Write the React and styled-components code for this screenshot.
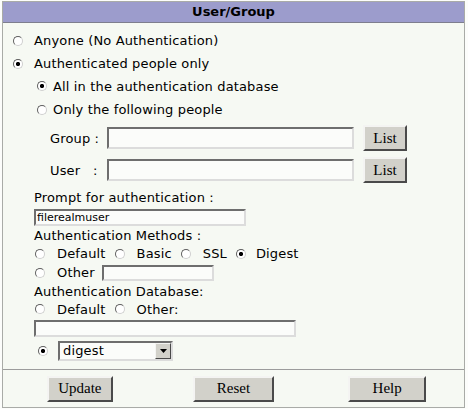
import React from 'react';
import styled, { createGlobalStyle } from 'styled-components';

const GlobalStyle = createGlobalStyle`
  body {
    margin: 0;
    background: #fcfdfb;
    font-family: "DejaVu Sans", Verdana, sans-serif;
    font-size: 13px;
    color: #000;
  }
`;

const Frame = styled.div`
  width: 461px;
  margin: 1px 0 0 2px;
  border: 1px solid #a9aba7;
  background: #f6f9f3;
`;

const Header = styled.div`
  height: 20px;
  line-height: 20px;
  background: #9c9ccc;
  border-bottom: 1px solid #7e7e8e;
  text-align: center;
  font-weight: bold;
`;

const Body = styled.div`
  padding: 6px 0 6px 0;
  letter-spacing: 0.15px;
`;

// one line of the form, height and indent vary per use
const Line = styled.div`
  display: flex;
  align-items: center;
  height: ${p => p.$h}px;
  padding-left: ${p => p.$indent}px;
  white-space: nowrap;
`;

const Radio = styled.input.attrs({ type: 'radio' })`
  appearance: none;
  box-sizing: border-box;
  flex: none;
  width: 10px;
  height: 10px;
  margin: 0 ${p => p.$gap ?? 12}px 0 0;
  border-radius: 50%;
  border: 1px solid;
  border-color: #5e5e5e #cfcfcf #cfcfcf #5e5e5e;
  background: #fff;
  &:checked {
    background: radial-gradient(circle, #000 0 1.8px, #fff 2.4px);
  }
`;

const Choice = styled.label`
  display: inline-flex;
  align-items: center;
  margin-right: 9px;
`;

const FieldLabel = styled.span`
  width: 57px;
  white-space: pre;
`;

const TextBox = styled.input.attrs({ type: 'text' })`
  box-sizing: border-box;
  width: ${p => p.$w}px;
  height: ${p => p.$h}px;
  margin: 0;
  padding: 0 0 0 1px;
  border: 2px solid;
  border-color: #6e6e6e #dcdcdc #dcdcdc #6e6e6e;
  background: #fbfcfa;
  font-family: "DejaVu Sans", Verdana, sans-serif;
  font-size: 11px;
  color: #000;
  outline: none;
`;

const FormButton = styled.button`
  box-sizing: border-box;
  width: ${p => p.$w}px;
  height: ${p => p.$h ?? 26}px;
  margin-left: ${p => p.$ml ?? 0}px;
  padding: 0;
  background: #d2d1ca;
  border: 2px solid;
  border-color: #f4f4f2 #4a4a4a #4a4a4a #f4f4f2;
  font-family: "Liberation Serif", "Times New Roman", serif;
  font-size: 15px;
  letter-spacing: 0;
  color: #000;
`;

const SelectBox = styled.div`
  box-sizing: border-box;
  display: flex;
  align-items: stretch;
  width: 115px;
  height: 20px;
  border: 2px solid;
  border-color: #6e6e6e #dcdcdc #dcdcdc #6e6e6e;
  background: #fbfcfa;
`;

const SelectValue = styled.span`
  flex: 1;
  padding-left: 3px;
  line-height: 16px;
`;

const ArrowBox = styled.span`
  box-sizing: border-box;
  display: flex;
  align-items: center;
  justify-content: center;
  width: 16px;
  background: #d2d1ca;
  border: 1px solid;
  border-color: #f4f4f2 #4a4a4a #4a4a4a #f4f4f2;
`;

const Footer = styled.div`
  display: grid;
  grid-template-columns: repeat(3, 1fr);
  justify-items: center;
  align-items: center;
  height: 37px;
  border-top: 1px solid #9c9c9c;
`;

const App = () => (
  <>
    <GlobalStyle />
    <Frame>
      <Header>User/Group</Header>
      <Body>
        <Line $h={23} $indent={10}>
          <Radio name="who" $gap={11} />
          Anyone (No Authentication)
        </Line>
        <Line $h={23} $indent={10}>
          <Radio name="who" $gap={11} defaultChecked />
          Authenticated people only
        </Line>
        <Line $h={22} $indent={34}>
          <Radio name="scope" $gap={6} defaultChecked />
          All in the authentication database
        </Line>
        <Line $h={25} $indent={34}>
          <Radio name="scope" $gap={6} />
          Only the following people
        </Line>
        <Line $h={32} $indent={47}>
          <FieldLabel>Group :</FieldLabel>
          <TextBox $w={247} $h={22} />
          <FormButton $w={44} $ml={9}>List</FormButton>
        </Line>
        <Line $h={32} $indent={47}>
          <FieldLabel>User   :</FieldLabel>
          <TextBox $w={247} $h={22} />
          <FormButton $w={44} $ml={9}>List</FormButton>
        </Line>
        <Line $h={22} $indent={31}>Prompt for authentication :</Line>
        <Line $h={18} $indent={31}>
          <TextBox $w={212} $h={17} defaultValue="filerealmuser" />
        </Line>
        <Line $h={18} $indent={31}>Authentication Methods :</Line>
        <Line $h={19} $indent={32}>
          <Choice><Radio name="method" />Default</Choice>
          <Choice><Radio name="method" />Basic</Choice>
          <Choice><Radio name="method" />SSL</Choice>
          <Choice><Radio name="method" $gap={10} defaultChecked />Digest</Choice>
        </Line>
        <Line $h={19} $indent={32}>
          <Choice><Radio name="method" />Other</Choice>
          <TextBox $w={112} $h={16} style={{ marginLeft: -2 }} />
        </Line>
        <Line $h={18} $indent={31}>Authentication Database:</Line>
        <Line $h={18} $indent={32}>
          <Choice><Radio name="db" />Default</Choice>
          <Choice><Radio name="db" />Other:</Choice>
        </Line>
        <Line $h={21} $indent={31}>
          <TextBox $w={262} $h={17} />
        </Line>
        <Line $h={24} $indent={35}>
          <Radio name="dbsel" $gap={10} defaultChecked />
          <SelectBox>
            <SelectValue>digest</SelectValue>
            <ArrowBox>
              <svg width="7" height="4" viewBox="0 0 7 4">
                <path d="M0 0h7L3.5 4z" fill="#000" />
              </svg>
            </ArrowBox>
          </SelectBox>
        </Line>
      </Body>
      <Footer>
        <FormButton $w={66}>Update</FormButton>
        <FormButton $w={81}>Reset</FormButton>
        <FormButton $w={78}>Help</FormButton>
      </Footer>
    </Frame>
  </>
);

export default App;
